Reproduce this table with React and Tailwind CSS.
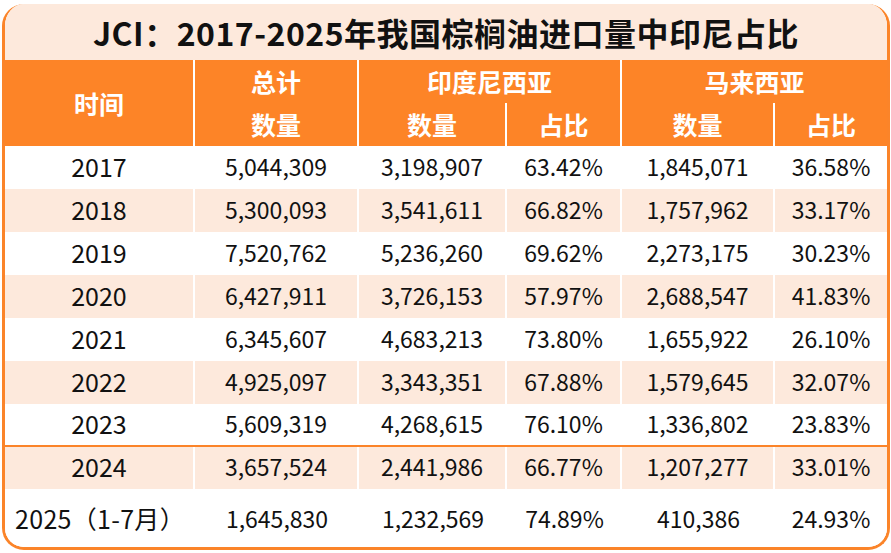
import React from 'react';

const rows = [
  ['2017', '5,044,309', '3,198,907', '63.42%', '1,845,071', '36.58%'],
  ['2018', '5,300,093', '3,541,611', '66.82%', '1,757,962', '33.17%'],
  ['2019', '7,520,762', '5,236,260', '69.62%', '2,273,175', '30.23%'],
  ['2020', '6,427,911', '3,726,153', '57.97%', '2,688,547', '41.83%'],
  ['2021', '6,345,607', '4,683,213', '73.80%', '1,655,922', '26.10%'],
  ['2022', '4,925,097', '3,343,351', '67.88%', '1,579,645', '32.07%'],
  ['2023', '5,609,319', '4,268,615', '76.10%', '1,336,802', '23.83%'],
  ['2024', '3,657,524', '2,441,986', '66.77%', '1,207,277', '33.01%'],
];

const cols = 'grid grid-cols-[190px_164px_148px_115px_153px_112px]';

export default function App() {
  return (
    <div className="w-[891px] h-[553px] bg-white pt-[4px] pl-[2px] font-['Noto_Sans_CJK_SC','Noto_Sans',sans-serif] text-[#111]">
      <div className="w-[888px] h-[546px] rounded-[22px] border-[3px] border-t-0 border-[#fb8429] overflow-hidden flex flex-col bg-white">
        {/* title */}
        <div className="h-[56px] bg-[#fde9dc] flex items-center justify-center text-[32px] font-bold leading-none tracking-[0.5px]">
          JCI：2017-2025年我国棕榈油进口量中印尼占比
        </div>

        {/* header */}
        <div className={`${cols} grid-rows-[43px_43px] bg-[#fd8427] text-white font-bold text-[25px] leading-none`}>
          <div className="row-span-2 flex items-center justify-center border-r-2 border-white">时间</div>
          <div className="flex items-center justify-center border-r-2 border-white">总计</div>
          <div className="col-span-2 flex items-center justify-center border-r-2 border-white">印度尼西亚</div>
          <div className="col-span-2 flex items-center justify-center">马来西亚</div>
          <div className="flex items-center justify-center border-r-2 border-white">数量</div>
          <div className="flex items-center justify-center border-r-2 border-white">数量</div>
          <div className="flex items-center justify-center border-r-2 border-white">占比</div>
          <div className="flex items-center justify-center border-r-2 border-white">数量</div>
          <div className="flex items-center justify-center">占比</div>
        </div>

        {/* body */}
        {rows.map((r, i) => (
          <div
            key={r[0]}
            className={`${cols} ${i % 2 === 1 ? 'bg-[#fde9dc]' : 'bg-white'} ${i === 6 ? 'h-[43px] border-b-2 border-[#fb8429]' : i === 7 ? 'h-[42px]' : 'h-[43px]'} text-[23px] leading-none`}
          >
            {r.map((c, j) => (
              <div
                key={j}
                className={`flex items-center justify-center pb-[3px] ${j < 5 ? 'border-r-2 border-white' : ''} ${j === 0 ? 'text-[25px]' : ''}`}
              >
                {c}
              </div>
            ))}
          </div>
        ))}
        <div className={`${cols} flex-1 bg-white text-[23px] leading-none`}>
          <div className="flex items-center justify-center text-[25px] tracking-[0.3px]">2025（1-7月）</div>
          <div className="flex items-center justify-center">1,645,830</div>
          <div className="flex items-center justify-center">1,232,569</div>
          <div className="flex items-center justify-center">74.89%</div>
          <div className="flex items-center justify-center">410,386</div>
          <div className="flex items-center justify-center">24.93%</div>
        </div>
      </div>
    </div>
  );
}
